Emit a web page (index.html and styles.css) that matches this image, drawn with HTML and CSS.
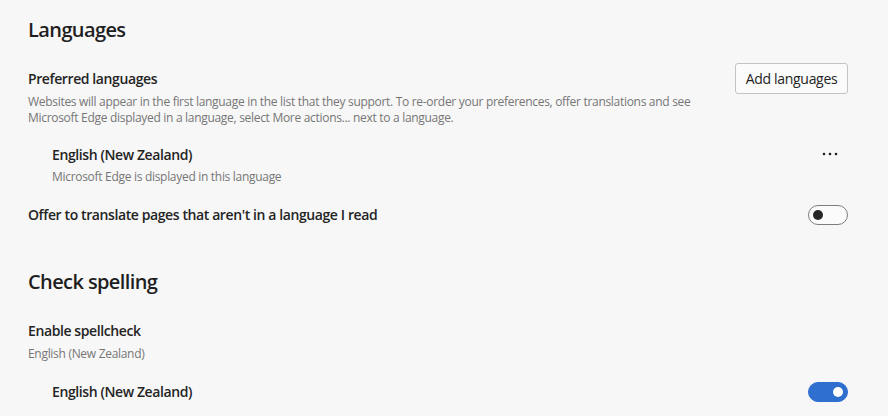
FILE: index.html
```html
<!DOCTYPE html>
<html lang="en">
<head>
<meta charset="utf-8">
<title>Languages</title>
<link rel="stylesheet" href="styles.css">
</head>
<body>
<main class="page">
  <section class="section">
    <h2 class="section-title">Languages</h2>
    <div class="row row-top">
      <div class="row-text">
        <div class="label">Preferred languages</div>
        <div class="desc">Websites will appear in the first language in the list that they support. To re-order your preferences, offer translations and see<br>Microsoft Edge displayed in a language, select More actions... next to a language.</div>
      </div>
      <button class="btn" type="button">Add languages</button>
    </div>
    <div class="row lang-row">
      <div class="row-text">
        <div class="label">English (New Zealand)</div>
        <div class="desc sub">Microsoft Edge is displayed in this language</div>
      </div>
      <button class="more" type="button" aria-label="More actions">
        <svg width="16" height="4" viewBox="0 0 16 4"><circle cx="2" cy="2" r="1.3" fill="#1f1f1f"/><circle cx="8" cy="2" r="1.3" fill="#1f1f1f"/><circle cx="14" cy="2" r="1.3" fill="#1f1f1f"/></svg>
      </button>
    </div>
    <div class="row toggle-row offer-row">
      <div class="label">Offer to translate pages that aren't in a language I read</div>
      <span class="toggle"><span class="knob"></span></span>
    </div>
  </section>
  <section class="section section-spell">
    <h2 class="section-title">Check spelling</h2>
    <div class="row-text spell-text">
      <div class="label">Enable spellcheck</div>
      <div class="desc sub">English (New Zealand)</div>
    </div>
    <div class="row toggle-row spell-lang">
      <div class="label">English (New Zealand)</div>
      <span class="toggle on"><span class="knob"></span></span>
    </div>
  </section>
</main>
</body>
</html>
```

FILE: styles.css
```css
* { box-sizing: border-box; }
html, body {
  margin: 0;
  padding: 0;
  background: #f7f7f7;
}
body {
  font-family: "Open Sans", "Noto Sans", sans-serif;
  color: #242424;
  width: 888px;
  height: 416px;
  overflow: hidden;
}
.page {
  padding: 16px 40px 0 28px;
}
.section-title {
  margin: 0;
  font-size: 20px;
  line-height: 28px;
  font-weight: 600;
  letter-spacing: -0.6px;
  color: #1f1f1f;
}
.row {
  display: flex;
  justify-content: space-between;
}
.row-top {
  margin-top: 19px;
  align-items: flex-start;
}
.row-top .row-text {
  padding-top: 6px;
}
.label {
  font-size: 14px;
  line-height: 20px;
  font-weight: 600;
  letter-spacing: -0.4px;
  color: #242424;
}
.desc {
  margin-top: 5px;
  font-size: 12px;
  line-height: 16px;
  letter-spacing: -0.3px;
  color: #767676;
}
.desc.sub {
  margin-top: 4px;
}
.btn {
  width: 113px;
  height: 31px;
  padding: 0;
  border: 1px solid #c4c4c4;
  border-radius: 3px;
  background: #fbfbfb;
  font-family: inherit;
  font-size: 14px;
  letter-spacing: -0.3px;
  color: #242424;
}
.lang-row {
  margin-top: 19px;
  padding-left: 24px;
  align-items: flex-start;
}
.more {
  margin-top: 7px;
  margin-right: 10px;
  padding: 0;
  border: 0;
  background: none;
  display: flex;
}
.toggle-row {
  align-items: center;
}
.offer-row {
  margin-top: 20px;
}
.toggle {
  width: 40px;
  height: 20px;
  border: 1px solid #7e7e7e;
  border-radius: 10px;
  background: #fbfbfb;
  display: flex;
  align-items: center;
  padding: 0 4px;
}
.knob {
  width: 10px;
  height: 10px;
  border-radius: 50%;
  background: #262626;
}
.toggle.on {
  background: #2f6fcf;
  border-color: #2f6fcf;
  justify-content: flex-end;
}
.toggle.on .knob {
  background: #ffffff;
}
.section-spell {
  margin-top: 43px;
}
.spell-text {
  margin-top: 25px;
}
.spell-text .desc.sub {
  margin-top: 5px;
}
.spell-lang {
  margin-top: 20px;
  padding-left: 24px;
}
```
